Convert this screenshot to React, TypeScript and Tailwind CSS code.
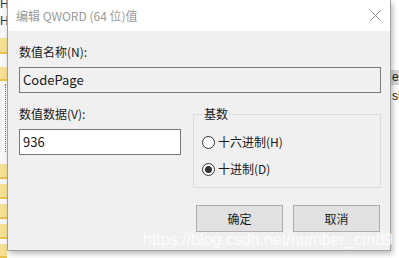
import { useState } from 'react';

const font = "font-['Microsoft_YaHei','Noto_Sans_CJK_SC',sans-serif]";

function Radio({ checked, label, onSelect }: { checked: boolean; label: string; onSelect: () => void }) {
  return (
    <button type="button" onClick={onSelect} className="flex items-center h-4 text-[12px] leading-4 text-[#1a1a1a]">
      <span className="w-[13px] h-[13px] rounded-full border border-[#333333] bg-white flex items-center justify-center">
        {checked && <span className="w-[7px] h-[7px] rounded-full bg-[#333333]" />}
      </span>
      <span className="ml-[3px]">{label}</span>
    </button>
  );
}

function Tile({ h = 'h-[15px]' }: { h?: string }) {
  return <div className={`w-full ${h} bg-[#f6df95] border-b-2 border-[#e8c24f]`} />;
}

export default function App() {
  const [base, setBase] = useState<'hex' | 'dec'>('dec');

  return (
    <div className={`relative w-[399px] h-[258px] overflow-hidden bg-white flex ${font}`}>
      {/* 뒤쪽 창 흔적 (왼쪽) */}
      <div className="w-[7px] h-full bg-[#f7f7f7] flex flex-col overflow-hidden font-['Liberation_Sans'] text-[12px] leading-[13px] text-[#1b3a6b]">
        <span className="mt-[-2px]">H</span>
        <span className="mt-[4px]">H</span>
        <div className="mt-[10px] flex flex-col gap-[13px]">
          <Tile h="h-[16px]" />
          <Tile h="h-[14px]" />
        </div>
        <div className="ml-[5px] mt-[3px] h-[72px] border-l border-dotted border-[#777777]" />
        <div className="mt-[12px] flex flex-col gap-[5px]">
          <Tile />
          <Tile />
          <Tile />
          <Tile />
          <Tile h="h-[14px]" />
        </div>
      </div>

      {/* 대화상자 */}
      <div className="w-[384px] h-[251px] border border-t-0 border-[#a0a0a0] bg-[#f0f0f0] shadow-[2px_3px_5px_rgba(0,0,0,0.25)] flex flex-col relative z-10">
        <div className="h-[31px] bg-white flex items-center justify-between pl-[8px] pr-[8px]">
          <span className="text-[12px] leading-4 text-[#9a9a9a]">编辑 QWORD (64 位)值</span>
          <svg width="11" height="11" viewBox="0 0 11 11" className="mr-[1px] mt-[-1px]">
            <path d="M0.5 0.5L10.5 10.5M10.5 0.5L0.5 10.5" stroke="#8a8a8a" strokeWidth="1" />
          </svg>
        </div>

        <div className="pl-[11px] pr-[9px] pt-[13px] text-[12px] leading-4 text-[#1a1a1a]">
          <div>数值名称(N):</div>
          <div className="mt-[7px] h-[26px] border border-[#7a7a7a] bg-[#f0f0f0] flex items-center px-[3px] text-[13px]">
            CodePage
          </div>

          <div className="mt-[13px] flex">
            <div className="w-[162px]">
              <div>数值数据(V):</div>
              <div className="mt-[7px] h-[26px] border border-[#7a7a7a] bg-white flex items-center px-[3px] text-[13px]">
                936
              </div>
            </div>
            <fieldset className="ml-[12px] w-[188px] h-[82px] border border-[#dcdcdc] px-[8px] pt-[12px] flex flex-col gap-[11px]">
              <legend className="ml-[1px] px-[1px]">基数</legend>
              <Radio checked={base === 'hex'} label="十六进制(H)" onSelect={() => setBase('hex')} />
              <Radio checked={base === 'dec'} label="十进制(D)" onSelect={() => setBase('dec')} />
            </fieldset>
          </div>

          <div className="mt-[17px] flex justify-end gap-[10px] pr-[1px]">
            <button type="button" className="w-[87px] h-[27px] border border-[#adadad] bg-[#e1e1e1]">确定</button>
            <button type="button" className="w-[87px] h-[27px] border border-[#adadad] bg-[#e1e1e1]">取消</button>
          </div>
        </div>
      </div>

      {/* 뒤쪽 창 흔적 (오른쪽) */}
      <div className="flex-1 flex flex-col pt-[70px] overflow-hidden font-['Liberation_Sans'] text-[12px] leading-[15px] text-[#222222] whitespace-nowrap">
        <span className="bg-[#d9d9d9] pl-[1px]">el</span>
        <span className="mt-[4px] pl-[1px]">sh</span>
      </div>

      <span className="absolute left-[143px] top-[230px] z-20 text-[16px] leading-5 text-white/80 font-['Liberation_Sans'] whitespace-nowrap pointer-events-none">
        https://blog.csdn.net/number_cmd9
      </span>
    </div>
  );
}
